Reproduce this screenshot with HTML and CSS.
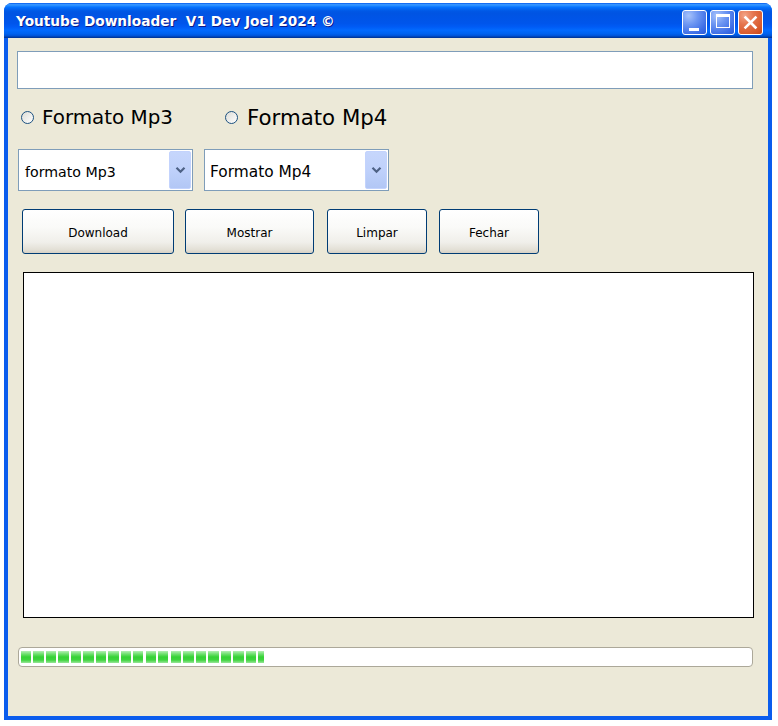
FILE: index.html
```html
<!DOCTYPE html>
<html lang="pt">
<head>
<meta charset="utf-8">
<title>Youtube Downloader</title>
<link rel="stylesheet" href="styles.css">
</head>
<body>
<div class="window">
  <div class="titlebar">
    <span class="title">Youtube Downloader&nbsp; V1 Dev Joel 2024 ©</span>
    <div class="controls">
      <div class="tb tb-blue"><span class="min-bar"></span></div>
      <div class="tb tb-blue"><span class="max-box"></span></div>
      <div class="tb tb-close">
        <svg width="25" height="25" viewBox="0 0 25 25"><path d="M7.5 7.5 L17.5 17.5 M17.5 7.5 L7.5 17.5" stroke="#fff" stroke-width="2.6" stroke-linecap="square" fill="none"/></svg>
      </div>
    </div>
  </div>
  <div class="client">
    <div class="url"></div>
    <div class="radios">
      <div class="radio r1"><span class="dot"></span><span>Formato Mp3</span></div>
      <div class="radio r2"><span class="dot"></span><span>Formato Mp4</span></div>
    </div>
    <div class="combos">
      <div class="combo c1">
        <span class="ctext">formato Mp3</span>
        <span class="arrow"><svg width="11" height="8" viewBox="0 0 11 8"><path d="M1.5 1.8 L5.5 5.8 L9.5 1.8" stroke="#4d6185" stroke-width="2.2" fill="none"/></svg></span>
      </div>
      <div class="combo c2">
        <span class="ctext">Formato Mp4</span>
        <span class="arrow"><svg width="11" height="8" viewBox="0 0 11 8"><path d="M1.5 1.8 L5.5 5.8 L9.5 1.8" stroke="#4d6185" stroke-width="2.2" fill="none"/></svg></span>
      </div>
    </div>
    <div class="buttons">
      <div class="btn b-download">Download</div>
      <div class="btn b-mostrar">Mostrar</div>
      <div class="btn b-limpar">Limpar</div>
      <div class="btn b-fechar">Fechar</div>
    </div>
    <div class="output"></div>
    <div class="progress"><div class="fill"></div></div>
  </div>
</div>
</body>
</html>
```
FILE: styles.css
```css
html, body {
  margin: 0;
  padding: 0;
  background: #ffffff;
}

body {
  font-family: "DejaVu Sans", "Liberation Sans", sans-serif;
  width: 778px;
  height: 726px;
  overflow: hidden;
}

.window {
  margin: 3px 0 0 4px;
  width: 768px;
  height: 717px;
  border-radius: 8px 8px 0 0;
  background: #0a5ced;
  display: flex;
  flex-direction: column;
}

.titlebar {
  height: 35px;
  flex: none;
  border-radius: 8px 8px 0 0;
  background: linear-gradient(to bottom,
    #0058ee 0%, #3593ff 4%, #288eff 7%, #127dff 10%, #036ffc 13%,
    #0262ee 18%, #0057e5 24%, #0054e3 30%, #0055eb 58%, #005bf5 68%,
    #026afe 78%, #0062ef 88%, #0052d6 94%, #0040ab 97%, #003092 100%);
  display: flex;
  align-items: center;
  justify-content: space-between;
  padding: 0 9px 0 12px;
}

.title {
  color: #ffffff;
  font-weight: bold;
  font-size: 13.7px;
  text-shadow: 1px 1px 0 #0a1a8a;
  margin-top: 1px;
}

.controls {
  display: flex;
  gap: 3px;
  margin-top: 3px;
}

.tb {
  width: 25px;
  height: 25px;
  box-sizing: border-box;
  border: 1px solid #ffffff;
  border-radius: 3px;
  position: relative;
}

.tb-blue {
  background: radial-gradient(circle at 25% 20%, #a6c2fb 0%, #6e97f2 35%, #3d6de6 75%, #2c5bd8 100%);
}

.tb-close {
  background: radial-gradient(circle at 25% 20%, #f3a487 0%, #e5764f 35%, #d85a2c 75%, #c8451a 100%);
}

.tb-close svg {
  position: absolute;
  left: -1px;
  top: -1px;
}

.min-bar {
  position: absolute;
  left: 6px;
  top: 17px;
  width: 10px;
  height: 3px;
  background: #ffffff;
}

.max-box {
  position: absolute;
  left: 5px;
  top: 3px;
  width: 14px;
  height: 14px;
  box-sizing: border-box;
  border: 1px solid #ffffff;
  border-top-width: 3px;
}

.client {
  flex: 1;
  margin: 0 4px 4px 4px;
  background: #ece9d8;
  display: flex;
  flex-direction: column;
  align-items: flex-start;
}

.url {
  margin: 13px 0 0 9px;
  width: 736px;
  height: 38px;
  box-sizing: border-box;
  border: 1px solid #7f9db9;
  background: #ffffff;
}

.radios {
  display: flex;
  align-items: center;
  margin-top: 15px;
  height: 26px;
}

.radio {
  display: flex;
  align-items: center;
  gap: 8px;
  color: #000000;
  white-space: nowrap;
}

.r1 {
  margin-left: 13px;
  font-size: 19.9px;
}

.r2 {
  margin-left: 52px;
  font-size: 21.3px;
}

.dot {
  width: 13px;
  height: 13px;
  box-sizing: border-box;
  border: 1px solid #1c5180;
  border-radius: 50%;
  background: linear-gradient(135deg, #dcdcd6, #ffffff);
}

.r2 .dot {
  margin-right: 1px;
}

.combos {
  display: flex;
  margin-top: 19px;
}

.combo {
  height: 42px;
  box-sizing: border-box;
  border: 1px solid #7f9db9;
  background: #ffffff;
  display: flex;
  align-items: center;
  justify-content: space-between;
  padding: 1px;
}

.c1 {
  margin-left: 10px;
  width: 175px;
  font-size: 14.2px;
}

.c2 {
  margin-left: 11px;
  width: 185px;
  font-size: 15.4px;
}

.ctext {
  padding: 3px 0 0 5px;
  color: #000000;
  white-space: nowrap;
}

.c2 .ctext {
  padding-left: 4px;
}

.arrow {
  width: 22px;
  height: 38px;
  box-sizing: border-box;
  border: 1px solid #c3d3fd;
  border-radius: 2px;
  background: linear-gradient(to bottom, #c6d6fc 0%, #bfd1fb 50%, #b2c7f5 100%);
  display: flex;
  align-items: center;
  justify-content: center;
}

.buttons {
  display: flex;
  margin-top: 18px;
}

.btn {
  height: 45px;
  box-sizing: border-box;
  border: 1px solid #003c74;
  border-radius: 3px;
  background: linear-gradient(to bottom, #ffffff 0%, #fafaf8 40%, #f0efea 75%, #e3e0d6 92%, #d6d0c5 100%);
  font-size: 12px;
  color: #000000;
  display: flex;
  align-items: center;
  justify-content: center;
  padding-top: 2px;
}

.b-download {
  margin-left: 14px;
  width: 152px;
}

.b-mostrar {
  margin-left: 11px;
  width: 129px;
}

.b-limpar {
  margin-left: 13px;
  width: 100px;
}

.b-fechar {
  margin-left: 12px;
  width: 100px;
}

.output {
  margin: 18px 0 0 15px;
  width: 731px;
  height: 346px;
  box-sizing: border-box;
  border: 1px solid #000000;
  background: #ffffff;
}

.progress {
  margin: 29px 0 0 10px;
  width: 735px;
  height: 20px;
  box-sizing: border-box;
  border: 1px solid #aca899;
  border-radius: 4px;
  background: #ffffff;
  padding: 3px 2px;
}

.fill {
  width: 243px;
  height: 12px;
  background:
    repeating-linear-gradient(to right, transparent 0px, transparent 10px, #ffffff 10px, #ffffff 12.5px),
    linear-gradient(to bottom, #b4eeb4 0%, #6fe06f 25%, #34d234 50%, #3fd43f 75%, #9ae69a 100%);
}
```
